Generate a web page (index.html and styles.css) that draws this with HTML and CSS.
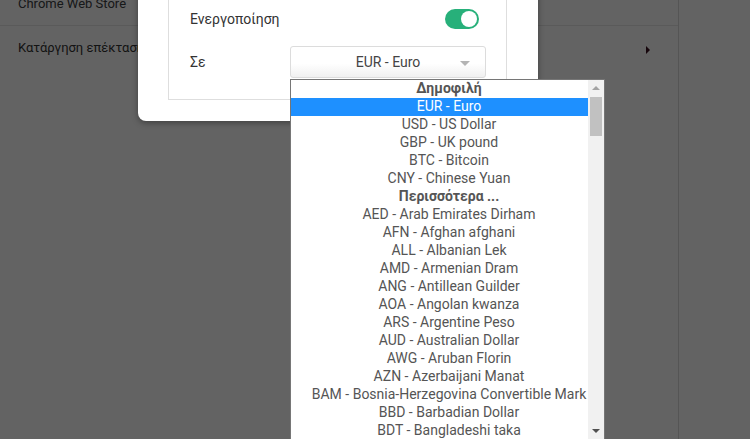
FILE: index.html
```html
<!DOCTYPE html>
<html lang="el">
<head>
<meta charset="utf-8">
<link rel="stylesheet" href="styles.css">
</head>
<body>
<div class="page">
  <div class="main">
    <div class="row first"><span class="link">Chrome Web Store</span></div>
    <div class="row second"><span class="link">Κατάργηση επέκτασης</span><span class="caret"></span></div>
  </div>
  <div class="side"></div>
</div>
<div class="overlay"></div>
<div class="dialog">
  <div class="box">
    <div class="field">
      <span class="label">Ενεργοποίηση</span>
      <span class="toggle"><span class="knob"></span></span>
    </div>
    <div class="field">
      <span class="label">Σε</span>
      <div class="select"><span class="value">EUR - Euro</span><span class="arrow"></span></div>
    </div>
  </div>
</div>
<div class="dropdown">
  <div class="options">
    <div class="opt group">Δημοφιλή</div>
    <div class="opt sel">EUR - Euro</div>
    <div class="opt">USD - US Dollar</div>
    <div class="opt">GBP - UK pound</div>
    <div class="opt">BTC - Bitcoin</div>
    <div class="opt">CNY - Chinese Yuan</div>
    <div class="opt group">Περισσότερα ...</div>
    <div class="opt">AED - Arab Emirates Dirham</div>
    <div class="opt">AFN - Afghan afghani</div>
    <div class="opt">ALL - Albanian Lek</div>
    <div class="opt">AMD - Armenian Dram</div>
    <div class="opt">ANG - Antillean Guilder</div>
    <div class="opt">AOA - Angolan kwanza</div>
    <div class="opt">ARS - Argentine Peso</div>
    <div class="opt">AUD - Australian Dollar</div>
    <div class="opt">AWG - Aruban Florin</div>
    <div class="opt">AZN - Azerbaijani Manat</div>
    <div class="opt">BAM - Bosnia-Herzegovina Convertible Mark</div>
    <div class="opt">BBD - Barbadian Dollar</div>
    <div class="opt">BDT - Bangladeshi taka</div>
  </div>
  <div class="scrollbar">
    <span class="sb-up"></span>
    <span class="thumb"></span>
    <span class="sb-down"></span>
  </div>
</div>
</body>
</html>
```

FILE: styles.css
```css
* { box-sizing: border-box; }
html, body { margin: 0; padding: 0; }
body {
  width: 750px;
  height: 439px;
  overflow: hidden;
  background: #fff;
  font-family: Roboto, "Noto Sans", "DejaVu Sans", sans-serif;
  position: relative;
}
.page {
  display: flex;
  height: 439px;
}
.main {
  width: 679px;
  border-right: 1px solid #dcdcdc;
}
.side { flex: 1; }
.row {
  display: flex;
  align-items: center;
  padding: 0 18px;
  font-size: 13px;
  color: #333;
}
.row.first {
  height: 36px;
  margin-top: -10px;
  padding-bottom: 9px;
  border-bottom: 1px solid #e8e8e8;
  color: #3c4043;
}
.row.second {
  height: 42px;
  justify-content: space-between;
  padding-right: 28px;
}
.caret {
  width: 0;
  height: 0;
  margin-top: 5px;
  border-top: 4px solid transparent;
  border-bottom: 4px solid transparent;
  border-left: 4px solid #3a1020;
}
.overlay {
  position: absolute;
  inset: 0;
  background: rgba(0, 0, 0, 0.61);
}
.dialog {
  position: absolute;
  left: 138px;
  top: -28px;
  width: 400px;
  padding: 20px 31px 21px 30px;
  background: #fff;
  border-radius: 0 0 8px 8px;
  box-shadow: 0 2px 6px rgba(0, 0, 0, 0.35);
}
.box {
  border: 1px solid #dedede;
  padding: 10px 20px 21px 21px;
  display: flex;
  flex-direction: column;
  gap: 11px;
}
.field {
  display: flex;
  align-items: center;
  height: 32px;
}
.label {
  width: 100px;
  font-size: 14px;
  color: #333;
}
.toggle {
  margin-left: auto;
  margin-right: 7px;
  width: 34px;
  height: 20px;
  border-radius: 10px;
  background: #27b07a;
  display: flex;
  align-items: center;
  justify-content: flex-end;
  padding-right: 2px;
}
.knob {
  width: 16px;
  height: 16px;
  border-radius: 50%;
  background: #fff;
}
.select {
  width: 196px;
  height: 32px;
  border: 1px solid #dcdcdc;
  border-radius: 3px;
  background: linear-gradient(#fff 55%, #f0f0f0);
  display: flex;
  align-items: center;
  justify-content: center;
  position: relative;
  font-size: 14px;
  color: #444;
}
.arrow {
  position: absolute;
  right: 15px;
  top: 14px;
  width: 0;
  height: 0;
  border-left: 5px solid transparent;
  border-right: 5px solid transparent;
  border-top: 5px solid #b4b4b4;
}
.dropdown {
  position: absolute;
  left: 290px;
  top: 79px;
  width: 315px;
  height: 380px;
  border: 1px solid #767676;
  background: #fff;
  display: flex;
}
.options {
  width: 297px;
}
.opt {
  height: 18px;
  line-height: 17px;
  text-align: center;
  padding-left: 19px;
  font-size: 14px;
  color: #555;
  white-space: nowrap;
}
.opt.group {
  font-weight: bold;
}
.opt.sel {
  background: #1e90ff;
  color: #fff;
}
.scrollbar {
  width: 16px;
  background: #f1f1f1;
  position: relative;
}
.sb-up {
  position: absolute;
  left: 4px;
  top: 6px;
  width: 0;
  height: 0;
  border-left: 4px solid transparent;
  border-right: 4px solid transparent;
  border-bottom: 4px solid #a3a3a3;
}
.thumb {
  position: absolute;
  left: 2px;
  top: 17px;
  width: 12px;
  height: 39px;
  background: #c1c1c1;
}
.sb-down {
  position: absolute;
  left: 4px;
  top: 349px;
  width: 0;
  height: 0;
  border-left: 4px solid transparent;
  border-right: 4px solid transparent;
  border-top: 4px solid #505050;
}
```
